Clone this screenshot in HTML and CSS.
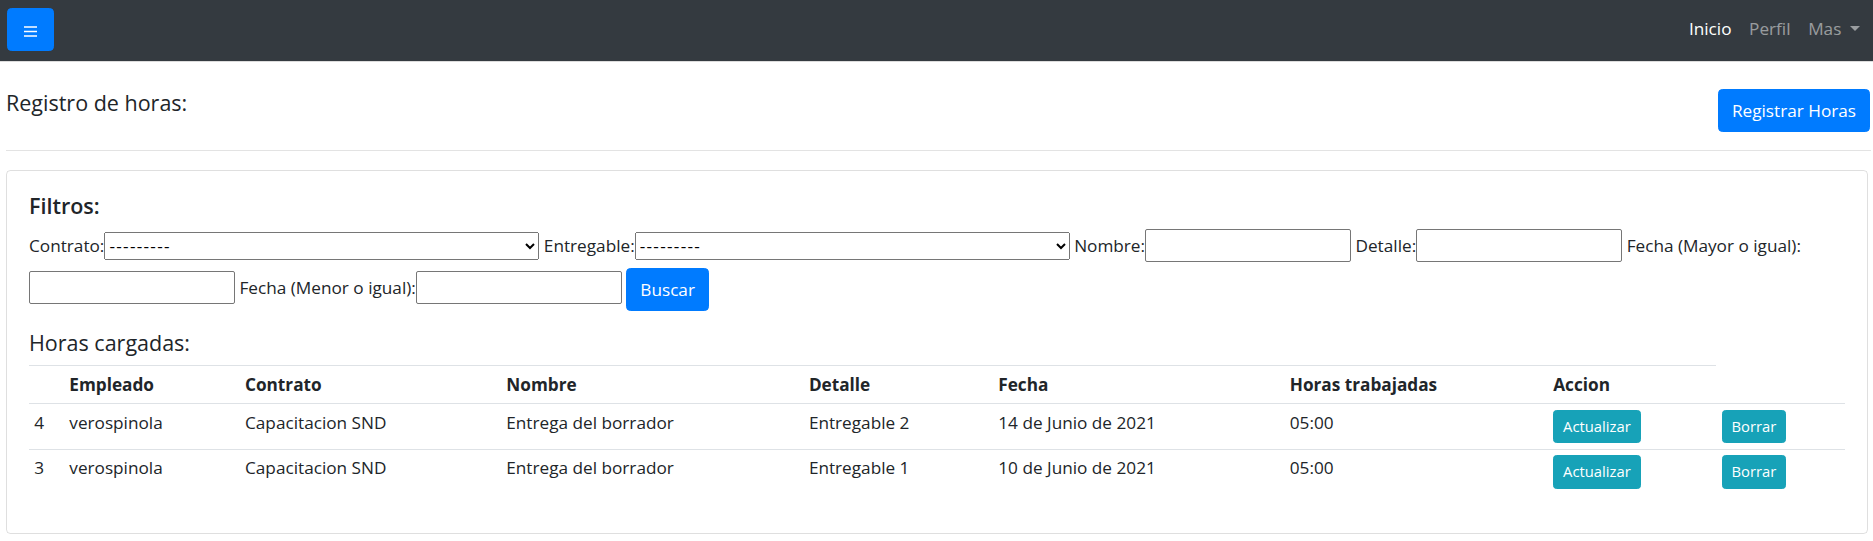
FILE: index.html
```html
<!DOCTYPE html>
<html lang="es">
<head>
<meta charset="utf-8">
<title>Registro de horas</title>
<link rel="stylesheet" href="styles.css">
</head>
<body>
<nav class="navbar">
  <button class="btn btn-primary toggler" type="button" aria-label="Menu">
    <svg class="toggler-icon" width="13" height="11" viewBox="0 0 13 11"><path d="M0 1h13M0 5.5h13M0 10h13" stroke="#fff" stroke-width="1.3"/></svg>
  </button>
  <ul class="nav-links">
    <li><a class="nav-link active" href="#">Inicio</a></li>
    <li><a class="nav-link" href="#">Perfil</a></li>
    <li><a class="nav-link dropdown-toggle" href="#">Mas </a></li>
  </ul>
</nav>
<main class="page">
  <div class="page-head">
    <h5 class="heading">Registro de horas:</h5>
    <button class="btn btn-primary" type="button">Registrar Horas</button>
  </div>
  <hr class="divider">
  <section class="card">
    <div class="card-body">
      <h5 class="heading heading-strong">Filtros:</h5>
      <form class="filters">
        <label>Contrato:</label><select class="field-select"><option>---------</option></select> <label>Entregable:</label><select class="field-select"><option>---------</option></select> <label>Nombre:</label><input class="field-input" type="text"> <label>Detalle:</label><input class="field-input" type="text"> <label>Fecha (Mayor o igual):</label><input class="field-input" type="text"> <label>Fecha (Menor o igual):</label><input class="field-input" type="text"> <button class="btn btn-primary" type="button">Buscar</button>
      </form>
      <h5 class="heading">Horas cargadas:</h5>
      <table class="table">
        <colgroup>
          <col class="col-id"><col class="col-emp"><col class="col-con"><col class="col-nom"><col class="col-det"><col class="col-fec"><col class="col-hor"><col class="col-act"><col class="col-del">
        </colgroup>
        <thead>
          <tr><th></th><th>Empleado</th><th>Contrato</th><th>Nombre</th><th>Detalle</th><th>Fecha</th><th>Horas trabajadas</th><th>Accion</th></tr>
        </thead>
        <tbody>
          <tr><td>4</td><td>verospinola</td><td>Capacitacion SND</td><td>Entrega del borrador</td><td>Entregable 2</td><td>14 de Junio de 2021</td><td>05:00</td><td><button class="btn btn-sm btn-info" type="button">Actualizar</button></td><td><button class="btn btn-sm btn-info" type="button">Borrar</button></td></tr>
          <tr><td>3</td><td>verospinola</td><td>Capacitacion SND</td><td>Entrega del borrador</td><td>Entregable 1</td><td>10 de Junio de 2021</td><td>05:00</td><td><button class="btn btn-sm btn-info" type="button">Actualizar</button></td><td><button class="btn btn-sm btn-info" type="button">Borrar</button></td></tr>
        </tbody>
      </table>
    </div>
  </section>
</main>
</body>
</html>
```
FILE: styles.css
```css
* { box-sizing: border-box; }
html, body { margin: 0; }
body {
  font-family: "Open Sans", "Liberation Sans", sans-serif;
  font-size: 17.2px;
  line-height: 26.4px;
  color: #212529;
  background: #fff;
}

/* navbar */
.navbar {
  display: flex;
  align-items: flex-start;
  justify-content: space-between;
  height: 62px;
  padding: 8px 4px 0 7px;
  background: #343a40;
  border-bottom: 1px solid #dcdcdc;
}
.nav-links {
  display: flex;
  list-style: none;
  margin: 8px 0 0;
  padding: 0;
}
.nav-link {
  display: block;
  padding: 0 8.8px;
  color: rgba(255, 255, 255, 0.5);
  text-decoration: none;
  white-space: pre;
}
.nav-link.active { color: #fff; }
.dropdown-toggle::after {
  content: "";
  display: inline-block;
  margin-left: 0.255em;
  vertical-align: 0.255em;
  border-top: 0.3em solid;
  border-right: 0.3em solid transparent;
  border-left: 0.3em solid transparent;
}

/* buttons */
.btn {
  display: inline-block;
  margin: 0;
  font-family: inherit;
  font-size: 17.2px;
  font-weight: 400;
  line-height: 27px;
  padding: 7px 13px;
  border: 1px solid transparent;
  border-radius: 4.4px;
  color: #fff;
  vertical-align: middle;
  cursor: pointer;
}
.btn-primary { background: #007bff; border-color: #007bff; }
.btn-info { background: #17a2b8; border-color: #17a2b8; }
.btn-sm {
  font-size: 14.8px;
  line-height: 23px;
  padding: 4.4px 8.8px;
  border-radius: 3.5px;
}
.toggler { padding: 7px 16px; }
.toggler-icon { display: inline-block; vertical-align: middle; }

/* page */
.page { padding: 27px 5px 0 6px; }
.page-head {
  display: flex;
  justify-content: space-between;
  align-items: flex-start;
  margin-right: -2px;
}
.heading {
  margin: 0;
  font-size: 21.5px;
  line-height: 26px;
  font-weight: 400;
}
.page-head .heading { margin-top: 1px; }
.divider {
  height: 0;
  margin: 18px -3px 19px 0;
  border: 0;
  border-top: 1px solid #e3e3e3;
}

/* card */
.card {
  border: 1px solid rgba(0, 0, 0, 0.125);
  border-radius: 4.4px;
}
.card-body { padding: 22px; }
.heading-strong { font-weight: 600; margin-bottom: 10px; }

/* filters */
.filters { margin: 0 0 19px; }
.filters label { display: inline-block; margin-bottom: 8.8px; }
.field-select {
  width: 435px;
  height: 28px;
  margin: 0;
  font-family: inherit;
  font-size: 17.2px;
  letter-spacing: 1.3px;
  color: #000;
}
.field-input {
  width: 206px;
  height: 33px;
  margin: 0;
  padding: 2px 3px;
  font-family: inherit;
  font-size: 17.2px;
  line-height: 26.4px;
  border: 1px solid #767676;
  border-radius: 2px;
  color: #000;
}

/* table */
.heading + .table { margin-top: 9px; }
.table {
  width: 100%;
  table-layout: fixed;
  border-collapse: collapse;
  margin-bottom: 17px;
}
.table th, .table td {
  padding: 5.3px;
  text-align: left;
  vertical-align: top;
}
.table th { font-weight: 700; border-top: 1px solid #dee2e6; }
.table td { border-top: 1px solid #dee2e6; }
.col-id { width: 35px; }
.col-emp { width: 175.7px; }
.col-con { width: 261.3px; }
.col-nom { width: 302.6px; }
.col-det { width: 189.4px; }
.col-fec { width: 291.5px; }
.col-hor { width: 263.5px; }
.col-act { width: 168.4px; }
.col-del { width: 128.6px; }
```
